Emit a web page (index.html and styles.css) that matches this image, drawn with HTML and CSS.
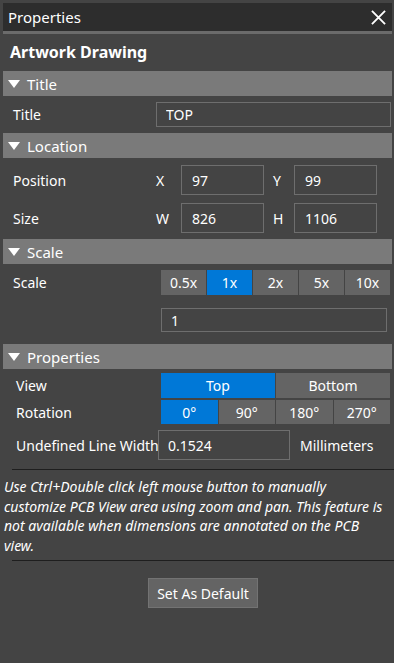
FILE: index.html
```html
<!DOCTYPE html>
<html lang="en">
<head>
    <meta charset="UTF-8">
    <meta name="viewport" content="width=device-width, initial-scale=1.0">
    <title>Properties</title>
    <link rel="stylesheet" href="styles.css">
</head>
<body>
    <div class="panel">
        <div class="titlebar">
            <span>Properties</span>
            <svg class="close" width="16" height="16" viewBox="0 0 16 16">
                <path d="M1 1 L15 15 M15 1 L1 15" stroke="#fff" stroke-width="2" fill="none"/>
            </svg>
        </div>
        <div class="heading">Artwork Drawing</div>

        <div class="section-header"><span class="arrow"></span>Title</div>
        <div class="row row-title">
            <span class="label">Title</span>
            <input class="field field-title" value="TOP">
        </div>

        <div class="section-header"><span class="arrow"></span>Location</div>
        <div class="row row-loc first">
            <span class="label">Position</span>
            <span class="axis">X</span>
            <input class="field field-num" value="97">
            <span class="axis axis2">Y</span>
            <input class="field field-num" value="99">
        </div>
        <div class="row row-loc last">
            <span class="label">Size</span>
            <span class="axis">W</span>
            <input class="field field-num" value="826">
            <span class="axis axis2">H</span>
            <input class="field field-num" value="1106">
        </div>

        <div class="section-header"><span class="arrow"></span>Scale</div>
        <div class="row row-scale">
            <span class="label">Scale</span>
            <div class="segments">
                <button class="seg">0.5x</button>
                <button class="seg active">1x</button>
                <button class="seg">2x</button>
                <button class="seg">5x</button>
                <button class="seg">10x</button>
            </div>
        </div>
        <div class="row row-scale-input">
            <input class="field field-scale" value="1">
        </div>

        <div class="section-header"><span class="arrow"></span>Properties</div>
        <div class="row row-toggle first">
            <span class="label label-wide">View</span>
            <div class="segments two">
                <button class="seg active">Top</button>
                <button class="seg">Bottom</button>
            </div>
        </div>
        <div class="row row-toggle">
            <span class="label label-wide">Rotation</span>
            <div class="segments four">
                <button class="seg active">0°</button>
                <button class="seg">90°</button>
                <button class="seg">180°</button>
                <button class="seg">270°</button>
            </div>
        </div>
        <div class="row row-width">
            <span class="label label-line">Undefined Line Width</span>
            <input class="field field-width" value="0.1524">
            <span class="unit">Millimeters</span>
        </div>

        <div class="separator top"></div>
        <div class="note">Use Ctrl+Double click left mouse button to manually<br>customize PCB View area using zoom and pan. This feature is<br>not available when dimensions are annotated on the PCB<br>view.</div>
        <div class="separator"></div>

        <div class="actions">
            <button class="btn-default">Set As Default</button>
        </div>
    </div>
</body>
</html>
```

FILE: styles.css
```css
body {
    margin: 0;
    background-color: #444444;
    color: #fff;
    font-family: "Noto Sans", "Open Sans", sans-serif;
    font-size: 14px;
}
.panel {
    width: 394px;
    height: 663px;
    overflow: hidden;
}
.titlebar {
    margin: 3px 2px 0 3px;
    height: 28px;
    background-color: #2d2d2d;
    border-bottom: 3px solid #6b6b6b;
    display: flex;
    align-items: center;
    justify-content: space-between;
    padding: 0 6px 0 5px;
    font-size: 15px;
}
.close {
    display: block;
    width: 15px;
    height: 15px;
}
.heading {
    height: 37px;
    line-height: 37px;
    padding-left: 10px;
    font-size: 16px;
    font-weight: bold;
}
.section-header {
    margin: 0 2px 0 3px;
    height: 25px;
    background-color: #7a7a7a;
    display: flex;
    align-items: center;
    font-size: 15px;
}
.arrow {
    width: 0;
    height: 0;
    border-left: 6px solid transparent;
    border-right: 6px solid transparent;
    border-top: 8px solid #fff;
    margin: 0 7px 0 5px;
}
.row {
    display: flex;
    align-items: center;
}
.label {
    padding-left: 13px;
    width: 143px;
}
.label-wide {
    padding-left: 16px;
    width: 145px;
}
.field {
    box-sizing: border-box;
    background-color: #444444;
    border: 1px solid #6e6e6e;
    color: #fff;
    font-family: inherit;
    font-size: 14px;
    padding: 0 0 0 9px;
    outline: none;
}
.row-title {
    margin: 6px 0;
}
.field-title {
    width: 235px;
    height: 25px;
}
.row-loc {
    margin-bottom: 8px;
}
.row-loc.first {
    margin-top: 7px;
}
.row-loc.last {
    margin-bottom: 6px;
}
.axis {
    width: 25px;
}
.axis2 {
    width: 30px;
    padding-left: 9px;
    box-sizing: border-box;
}
.field-num {
    width: 83px;
    height: 30px;
    padding-left: 10px;
}
.row-scale {
    margin-top: 6px;
    height: 25px;
}
.segments {
    display: flex;
    gap: 1px;
    height: 100%;
}
.row-scale .segments {
    width: 229px;
    margin-left: 5px;
}
.seg {
    flex: 1;
    border: none;
    background-color: #646464;
    color: #fff;
    font-family: inherit;
    font-size: 14px;
    padding: 0;
}
.seg.active {
    background-color: #0078d7;
}
.row-scale-input {
    padding-left: 161px;
    margin: 13px 0 12px 0;
}
.field-scale {
    width: 226px;
    height: 24px;
}
.row-toggle {
    height: 24px;
    margin-top: 2px;
}
.row-toggle.first {
    margin-top: 4px;
    height: 25px;
}
.row-toggle .segments {
    width: 229px;
}
.row-width {
    margin-top: 6px;
    height: 30px;
}
.label-line {
    padding-left: 16px;
    width: 142px;
    white-space: nowrap;
}
.field-width {
    width: 132px;
    height: 30px;
}
.unit {
    padding-left: 10px;
}
.separator {
    margin-left: 12px;
    height: 1px;
    background-color: #1e1e1e;
}
.separator.top {
    margin-top: 9px;
}
.note {
    padding: 7px 0 3px 4px;
    height: 80px;
    font-style: italic;
    line-height: 19.5px;
    white-space: nowrap;
}
.actions {
    display: flex;
    justify-content: center;
    padding: 17px 0 0 12px;
}
.btn-default {
    background-color: #646464;
    border: 1px solid #737373;
    color: #fff;
    font-family: inherit;
    font-size: 14px;
    height: 30px;
    padding: 0 8px;
}
```
